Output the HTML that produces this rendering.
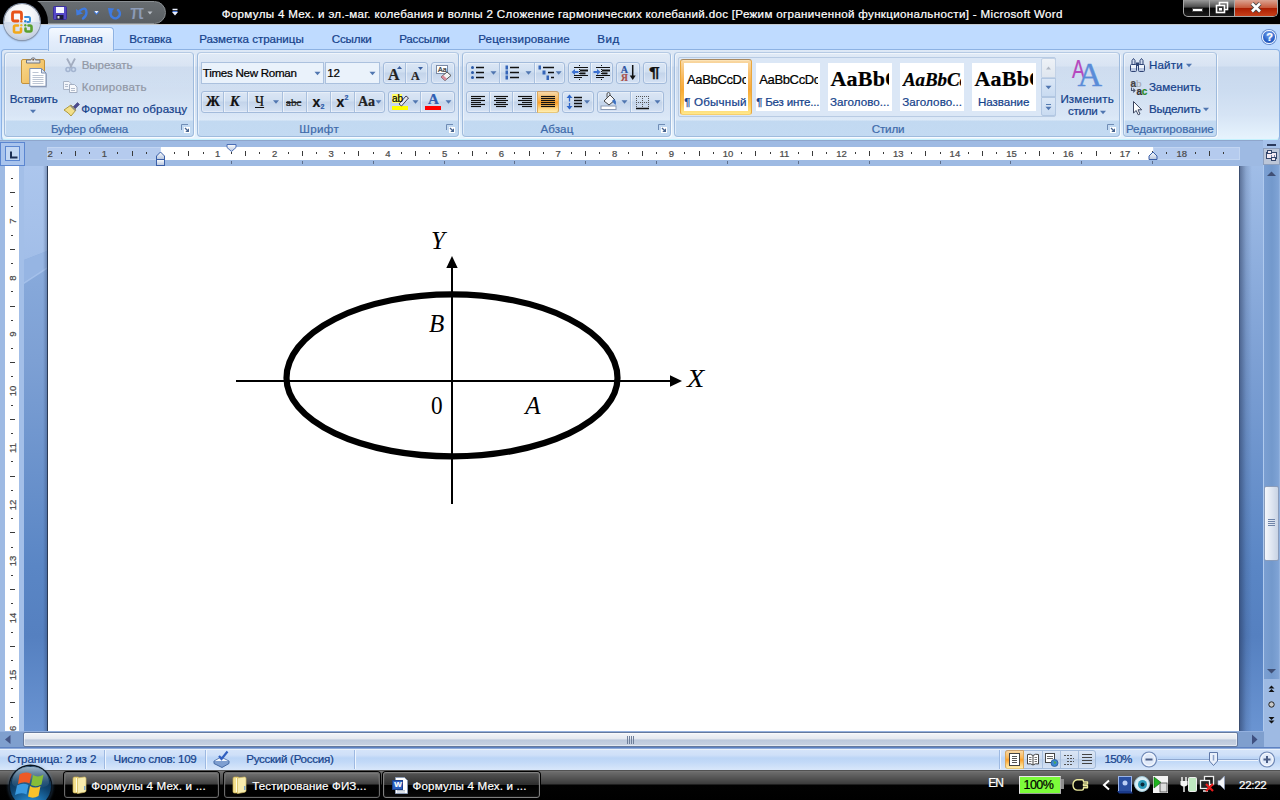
<!DOCTYPE html>
<html lang="ru"><head><meta charset="utf-8"><title>Microsoft Word</title>
<style>
html,body{margin:0;padding:0;}
body{width:1280px;height:800px;overflow:hidden;position:relative;background:#bfdbff;font:12px 'Liberation Sans', sans-serif;}
.a{position:absolute;box-sizing:border-box;}
.t{position:absolute;white-space:pre;}
svg{position:absolute;overflow:visible;}
.t{-webkit-text-stroke:0.22px currentColor;}

</style></head>
<body>
<div class="a" style="left:0px;top:0px;width:1280px;height:24px;background:#000;"></div>
<div class="a" style="left:0px;top:24px;width:1280px;height:1px;background:#c4c9ce;"></div>
<div class="a" style="left:22px;top:1px;width:144px;height:23px;background:linear-gradient(#686d71,#61666a 50%,#5a5f63);border:1px solid #8a8f93;border-radius:0 12px 12px 0;"></div>
<span class="t" style="left:221.7px;top:6.0px;line-height:15px;font:11.6px/15px 'Liberation Sans', sans-serif;color:#fff;letter-spacing:0.32px;">Формулы 4 Мех. и эл.-маг. колебания и волны 2 Сложение гармонических колебаний.doc [Режим ограниченной функциональности] - Microsoft Word</span>
<div class="a" style="left:1183px;top:0px;width:95px;height:17px;border:1px solid #a8a8a8;border-top:none;border-radius:0 0 5px 5px;background:linear-gradient(#9a9a9a,#4a4a4a 45%,#050505 50%,#1c1c1c);overflow:hidden;"><div class="a" style="left:25px;top:0;width:1px;height:17px;background:#a8a8a8"></div><div class="a" style="left:50px;top:0;width:1px;height:17px;background:#a8a8a8"></div><div class="a" style="left:51px;top:0;width:44px;height:17px;background:linear-gradient(#dba392,#c75a3c 45%,#ab1e02 50%,#cb451e)"></div></div>
<svg style="left:0;top:0" width="1280" height="60"><rect x="1192.500" y="8.500" width="10" height="3" fill="#fff" stroke="#444" stroke-width="1"/><rect x="1219.500" y="2.500" width="8" height="7" fill="none" stroke="#fff" stroke-width="1.600"/><rect x="1216.500" y="5.500" width="8" height="7" fill="#333" stroke="#fff" stroke-width="1.600"/><rect x="1219" y="8" width="3" height="2.500" fill="#fff"/><path d="M1252,3.500 l8,8 M1260,3.500 l-8,8" stroke="#444" stroke-width="4.500"/><path d="M1252,3.500 l8,8 M1260,3.500 l-8,8" stroke="#fff" stroke-width="2.600"/></svg>
<svg style="left:0;top:0" width="1280" height="60"><rect x="53.500" y="6.500" width="13" height="13" rx="1" fill="#5548c8" stroke="#3a2f9a" stroke-width="1"/><rect x="56" y="7" width="8" height="6" fill="#f4f6ff"/><rect x="56.500" y="15" width="7" height="4.500" fill="#1a1a3a"/><rect x="57.500" y="16" width="2" height="2.500" fill="#ddd"/><path d="M76,9 l0.500,6.500 l6.500,-2 z" fill="#3f7be0"/><path d="M79.500,11 q6.500,-5.500 7,1.500 q0,3.500 -3.500,6" fill="none" stroke="#3f7be0" stroke-width="2.400" stroke-linecap="round"/><polygon points="93.500,11.500 99.500,11.500 96.500,15" fill="#3f7be0"/><polygon points="94.500,11 98.500,11 96.500,13.500" fill="#eef3ff"/><path d="M111.300,11.300 A4.600,4.600 0 1 0 118,10" fill="none" stroke="#3f7be0" stroke-width="2.600" stroke-linecap="round"/><polygon points="108,8 114.500,8.500 109,14" fill="#3f7be0"/><polygon points="147.500,11.500 152.500,11.500 150,14.500" fill="#b8bec6"/><path d="M172.500,9.500 h5" stroke="#e8eefc" stroke-width="1.500"/><polygon points="172,12 178,12 175,15.500" fill="#e8eefc"/><path d="M172.500,11.500 h5" stroke="#4a7be0" stroke-width="1"/></svg>
<span class="t" style="left:130.0px;top:-2.0px;line-height:27px;font:21px/27px 'Liberation Sans', sans-serif;color:#8d9cb8;">π</span>
<div class="a" style="left:0px;top:0px;width:60px;height:24px;overflow:hidden;"><div class="a" style="left:-4px;top:-4px;width:52px;height:52px;border-radius:50%;background:#000;"></div></div>
<div class="a" style="left:4px;top:4px;width:36px;height:36px;border-radius:50%;background:radial-gradient(circle at 50% 30%,#ffffff 0,#f2f5f9 38%,#d3dbe8 68%,#a3b3ca 100%);box-shadow:0 0 0 1px #8a98b0, 0 1px 2px rgba(0,0,0,.45);"></div>
<div class="a" style="left:5px;top:22px;width:34px;height:17px;border-radius:0 0 17px 17px;background:linear-gradient(rgba(190,205,228,.55),rgba(255,255,255,.0));"></div>
<svg style="left:0;top:0" width="1280" height="60"><path d="M21.500,19 v-5 a2,2 0 0 0 -2,-2 h-5 a2,2 0 0 0 -2,2 v5 a2,2 0 0 0 2,2 h3.500" fill="none" stroke="#e8541a" stroke-width="2.800" stroke-linecap="round"/><path d="M25,17 h3.500 a1.500,1.500 0 0 1 1.500,1.500 v2 a1.500,1.500 0 0 1 -1.500,1.500 h-1" fill="none" stroke="#3a8fd8" stroke-width="2" stroke-linecap="round"/><path d="M18,25.500 h-2.500 a1.500,1.500 0 0 0 -1.500,1.500 v4 a1.500,1.500 0 0 0 1.500,1.500 h4 a1.500,1.500 0 0 0 1.500,-1.500 v-2.500" fill="none" stroke="#f2a81a" stroke-width="2.600" stroke-linecap="round"/><path d="M25.500,28.500 v1.500 a1.500,1.500 0 0 0 1.500,1.500 h3 a1.500,1.500 0 0 0 1.500,-1.500 v-3 a1.500,1.500 0 0 0 -1.500,-1.500 h-1.500" fill="none" stroke="#5aa02e" stroke-width="2.600" stroke-linecap="round"/><circle cx="21.300" cy="21.300" r="1.200" fill="#ee6a1a"/><circle cx="25.300" cy="21.300" r="1.200" fill="#2a7fd8"/><circle cx="21.300" cy="25.300" r="1.200" fill="#f5b82a"/><circle cx="25.300" cy="25.300" r="1.200" fill="#5aa832"/></svg>
<div class="a" style="left:1px;top:49px;width:1279px;height:91px;border:1px solid #8db2e3;border-bottom-color:#c3f1fd;border-radius:4px;background:linear-gradient(#dee9f6 0,#d4e1f2 16px,#c8d8ed 17px,#ccdcf0 40px,#d6e4f5 65px,#e6f3fd 88px);box-shadow:0 1px 0 #8fa3c8;"></div>
<div class="a" style="left:48px;top:27px;width:66px;height:24px;border:1px solid #8db2e3;border-bottom:none;border-radius:4px 4px 0 0;background:linear-gradient(#f4f9ff,#e3edfb 60%,#dde9f8);box-shadow:0 0 2px #d7ebff;"></div>
<span class="t" style="left:59.2px;top:31.0px;line-height:15px;font:11.6px/15px 'Liberation Sans', sans-serif;color:#15428b;letter-spacing:-0.09px;">Главная</span>
<span class="t" style="left:129.2px;top:31.0px;line-height:15px;font:11.6px/15px 'Liberation Sans', sans-serif;color:#15428b;letter-spacing:-0.08px;">Вставка</span>
<span class="t" style="left:199.2px;top:31.0px;line-height:15px;font:11.6px/15px 'Liberation Sans', sans-serif;color:#15428b;letter-spacing:-0.04px;">Разметка страницы</span>
<span class="t" style="left:331.7px;top:31.0px;line-height:15px;font:11.6px/15px 'Liberation Sans', sans-serif;color:#15428b;letter-spacing:-0.14px;">Ссылки</span>
<span class="t" style="left:399.2px;top:31.0px;line-height:15px;font:11.6px/15px 'Liberation Sans', sans-serif;color:#15428b;letter-spacing:-0.20px;">Рассылки</span>
<span class="t" style="left:478.2px;top:31.0px;line-height:15px;font:11.6px/15px 'Liberation Sans', sans-serif;color:#15428b;letter-spacing:0.16px;">Рецензирование</span>
<span class="t" style="left:597.2px;top:31.0px;line-height:15px;font:11.6px/15px 'Liberation Sans', sans-serif;color:#15428b;letter-spacing:0.57px;">Вид</span>
<div class="a" style="left:1262px;top:30px;width:14px;height:14px;border-radius:50%;background:radial-gradient(circle at 50% 30%,#7aa6ee,#2a62c9 60%,#1748a8);border:1px solid #f4f8ff;box-shadow:0 0 0 1px #6a8fd0;"></div>
<span class="t" style="left:1266.2px;top:30.3px;line-height:14px;font:11px/14px 'Liberation Sans', sans-serif;color:#fff;font-weight:bold;">?</span>
<div class="a" style="left:4px;top:52px;width:190px;height:85px;border:1px solid #9fbbdd;border-top-color:#b5cae4;border-radius:4px;background:linear-gradient(rgba(255,255,255,.12) 0,rgba(255,255,255,.08) 67px,#c2d9f1 68px,#c3daf2 84px);box-shadow:inset 1px 1px 0 rgba(255,255,255,.5), 1px 1px 0 rgba(255,255,255,.75);"></div>
<span class="t" style="left:50.9px;top:121.0px;line-height:15px;font:11.6px/15px 'Liberation Sans', sans-serif;color:#3e6aaa;letter-spacing:-0.13px;">Буфер обмена</span>
<svg style="left:0;top:0" width="1280" height="145"><path d="M181.5,130 v-5.500 h6.500" fill="none" stroke="#6f8cb5" stroke-width="1"/><rect x="184" y="127" width="6" height="6" fill="#fff"/><path d="M185,128 l3.500,3.500" stroke="#47648f" stroke-width="1.300"/><polygon points="189,132 189,128.300 185.3,132" fill="#47648f"/></svg>
<div class="a" style="left:197px;top:52px;width:262px;height:85px;border:1px solid #9fbbdd;border-top-color:#b5cae4;border-radius:4px;background:linear-gradient(rgba(255,255,255,.12) 0,rgba(255,255,255,.08) 67px,#c2d9f1 68px,#c3daf2 84px);box-shadow:inset 1px 1px 0 rgba(255,255,255,.5), 1px 1px 0 rgba(255,255,255,.75);"></div>
<span class="t" style="left:299.2px;top:121.0px;line-height:15px;font:11.6px/15px 'Liberation Sans', sans-serif;color:#3e6aaa;letter-spacing:0.37px;">Шрифт</span>
<svg style="left:0;top:0" width="1280" height="145"><path d="M446.5,130 v-5.500 h6.500" fill="none" stroke="#6f8cb5" stroke-width="1"/><rect x="449" y="127" width="6" height="6" fill="#fff"/><path d="M450,128 l3.500,3.500" stroke="#47648f" stroke-width="1.300"/><polygon points="454,132 454,128.300 450.3,132" fill="#47648f"/></svg>
<div class="a" style="left:462px;top:52px;width:209px;height:85px;border:1px solid #9fbbdd;border-top-color:#b5cae4;border-radius:4px;background:linear-gradient(rgba(255,255,255,.12) 0,rgba(255,255,255,.08) 67px,#c2d9f1 68px,#c3daf2 84px);box-shadow:inset 1px 1px 0 rgba(255,255,255,.5), 1px 1px 0 rgba(255,255,255,.75);"></div>
<span class="t" style="left:540.4px;top:121.0px;line-height:15px;font:11.6px/15px 'Liberation Sans', sans-serif;color:#3e6aaa;letter-spacing:0.09px;">Абзац</span>
<svg style="left:0;top:0" width="1280" height="145"><path d="M658.5,130 v-5.500 h6.500" fill="none" stroke="#6f8cb5" stroke-width="1"/><rect x="661" y="127" width="6" height="6" fill="#fff"/><path d="M662,128 l3.500,3.500" stroke="#47648f" stroke-width="1.300"/><polygon points="666,132 666,128.300 662.3,132" fill="#47648f"/></svg>
<div class="a" style="left:674px;top:52px;width:446px;height:85px;border:1px solid #9fbbdd;border-top-color:#b5cae4;border-radius:4px;background:linear-gradient(rgba(255,255,255,.12) 0,rgba(255,255,255,.08) 67px,#c2d9f1 68px,#c3daf2 84px);box-shadow:inset 1px 1px 0 rgba(255,255,255,.5), 1px 1px 0 rgba(255,255,255,.75);"></div>
<span class="t" style="left:871.7px;top:121.0px;line-height:15px;font:11.6px/15px 'Liberation Sans', sans-serif;color:#3e6aaa;letter-spacing:-0.13px;">Стили</span>
<svg style="left:0;top:0" width="1280" height="145"><path d="M1107.5,130 v-5.500 h6.500" fill="none" stroke="#6f8cb5" stroke-width="1"/><rect x="1110" y="127" width="6" height="6" fill="#fff"/><path d="M1111,128 l3.500,3.500" stroke="#47648f" stroke-width="1.300"/><polygon points="1115,132 1115,128.300 1111.3,132" fill="#47648f"/></svg>
<div class="a" style="left:1123px;top:52px;width:94px;height:85px;border:1px solid #9fbbdd;border-top-color:#b5cae4;border-radius:4px;background:linear-gradient(rgba(255,255,255,.12) 0,rgba(255,255,255,.08) 67px,#c2d9f1 68px,#c3daf2 84px);box-shadow:inset 1px 1px 0 rgba(255,255,255,.5), 1px 1px 0 rgba(255,255,255,.75);"></div>
<span class="t" style="left:1125.9px;top:121.0px;line-height:15px;font:11.6px/15px 'Liberation Sans', sans-serif;color:#3e6aaa;letter-spacing:-0.03px;">Редактирование</span>
<span class="t" style="left:9.7px;top:91.0px;line-height:15px;font:11.6px/15px 'Liberation Sans', sans-serif;color:#15428b;letter-spacing:-0.15px;">Вставить</span>
<svg style="left:0;top:0" width="1280" height="145"><polygon points="30,109.8 36,109.8 33,113.3" fill="#5076b0"/></svg>
<span class="t" style="left:81.7px;top:57.0px;line-height:15px;font:11.6px/15px 'Liberation Sans', sans-serif;color:#9198a6;letter-spacing:-0.10px;">Вырезать</span>
<span class="t" style="left:81.7px;top:79.0px;line-height:15px;font:11.6px/15px 'Liberation Sans', sans-serif;color:#9198a6;letter-spacing:0.27px;">Копировать</span>
<span class="t" style="left:81.2px;top:101.0px;line-height:15px;font:11.6px/15px 'Liberation Sans', sans-serif;color:#15428b;letter-spacing:0.12px;">Формат по образцу</span>
<svg style="left:0;top:0" width="1280" height="145"><defs><linearGradient id="cb" x1="0" y1="0" x2="1" y2="1"><stop offset="0" stop-color="#f9d98f"/><stop offset="1" stop-color="#eeb650"/></linearGradient></defs><rect x="21.500" y="59.500" width="23" height="24" rx="1.500" fill="url(#cb)" stroke="#c4923a" stroke-width="1"/><path d="M26.500,63 v-3 h4.500 a2.200,2.200 0 0 1 4.400,0 h4.500 v3z" fill="#e4e6ea" stroke="#6f7480" stroke-width="1"/><circle cx="33.200" cy="59.700" r="0.900" fill="#6a4a2a"/><path d="M31,70 h11.500 l4.500,4.500 v13 h-16z" fill="rgba(90,100,130,.35)"/><path d="M29.800,68.500 h11.700 l4.500,4.500 v13.300 h-16.200z" fill="#fff" stroke="#7d8fb0" stroke-width="1"/><path d="M41.500,68.500 v4.500 h4.500z" fill="#dfe6f0" stroke="#7d8fb0" stroke-width="1"/><path d="M32.500,72.500h6M32.500,75.500h11M32.500,77.500h11M32.500,79.500h11M32.500,81.500h11M32.500,83.500h11" stroke="#bcc5d3" stroke-width="1"/></svg>
<svg style="left:0;top:0" width="1280" height="145"><path d="M67,58.500 l5,9.500 M75,58.500 l-5,9.500" stroke="#a3adc0" stroke-width="1.800" fill="none"/><circle cx="68" cy="69.500" r="2" fill="none" stroke="#a3b4d0" stroke-width="1.600"/><circle cx="73.500" cy="69.500" r="2" fill="none" stroke="#a3b4d0" stroke-width="1.600"/></svg>
<svg style="left:0;top:0" width="1280" height="145"><path d="M63.500,81.500 h5.500 l2.500,2.500 v5.500 h-8z" fill="#f2f5fa" stroke="#a9b4c6" stroke-width="1"/><path d="M69.500,84.500 h5 l2.500,2.500 v5.500 h-7.500z" fill="#f7f9fc" stroke="#a3afc2" stroke-width="1"/><path d="M65,84.500h3M65,86.500h3M71,88.500h4M71,90.500h4" stroke="#b4bdcc" stroke-width="1"/></svg>
<svg style="left:0;top:0" width="1280" height="145"><path d="M73,107 l4.500,-4.500 l2,2 l-4.500,4.500z" fill="#4b4a8f" stroke="#33336b" stroke-width=".5"/><path d="M64,110 l7,-5 l5,5 l-5,6 q-2,-3 -7,-6z" fill="#f2df8a" stroke="#b09a3a" stroke-width="1"/><path d="M70.500,105.500 l5,5" stroke="#8a8a8a" stroke-width="1.500"/></svg>
<div class="a" style="left:201px;top:62px;width:123px;height:22px;border:1px solid #abc1de;background:#eaf2fb;"></div>
<div class="a" style="left:325px;top:62px;width:55px;height:22px;border:1px solid #abc1de;background:#eaf2fb;"></div>
<span class="t" style="left:202.8px;top:65.0px;line-height:15px;font:11.6px/15px 'Liberation Sans', sans-serif;color:#000;letter-spacing:-0.29px;">Times New Roman</span>
<span class="t" style="left:327.2px;top:65.0px;line-height:15px;font:11.6px/15px 'Liberation Sans', sans-serif;color:#000;letter-spacing:-0.03px;">12</span>
<svg style="left:0;top:0" width="1280" height="145"><polygon points="314.5,71.8 320.5,71.8 317.5,75.3" fill="#5076b0"/><polygon points="369.5,71.8 375.5,71.8 372.5,75.3" fill="#5076b0"/></svg>
<div class="a" style="left:383px;top:62px;width:45px;height:22px;border:1px solid #a3bbdb;border-radius:3px;background:linear-gradient(#dbe6f5,#d0dff1 45%,#c3d4ea 50%,#d5e2f4);box-shadow:inset 0 0 0 1px rgba(255,255,255,.35);"><div class="a" style="left:20.5px;top:0;width:1px;height:20px;background:#a9c0de;box-shadow:1px 0 0 rgba(255,255,255,.5)"></div></div>
<div class="a" style="left:431px;top:62px;width:24px;height:22px;border:1px solid #a3bbdb;border-radius:3px;background:linear-gradient(#dbe6f5,#d0dff1 45%,#c3d4ea 50%,#d5e2f4);box-shadow:inset 0 0 0 1px rgba(255,255,255,.35);"></div>
<div class="a" style="left:201px;top:91px;width:184px;height:22px;border:1px solid #a3bbdb;border-radius:3px;background:linear-gradient(#dbe6f5,#d0dff1 45%,#c3d4ea 50%,#d5e2f4);box-shadow:inset 0 0 0 1px rgba(255,255,255,.35);"><div class="a" style="left:21px;top:0;width:1px;height:20px;background:#a9c0de;box-shadow:1px 0 0 rgba(255,255,255,.5)"></div><div class="a" style="left:44.5px;top:0;width:1px;height:20px;background:#a9c0de;box-shadow:1px 0 0 rgba(255,255,255,.5)"></div><div class="a" style="left:80px;top:0;width:1px;height:20px;background:#a9c0de;box-shadow:1px 0 0 rgba(255,255,255,.5)"></div><div class="a" style="left:103.5px;top:0;width:1px;height:20px;background:#a9c0de;box-shadow:1px 0 0 rgba(255,255,255,.5)"></div><div class="a" style="left:127.5px;top:0;width:1px;height:20px;background:#a9c0de;box-shadow:1px 0 0 rgba(255,255,255,.5)"></div><div class="a" style="left:151.5px;top:0;width:1px;height:20px;background:#a9c0de;box-shadow:1px 0 0 rgba(255,255,255,.5)"></div></div>
<div class="a" style="left:388px;top:91px;width:67px;height:22px;border:1px solid #a3bbdb;border-radius:3px;background:linear-gradient(#dbe6f5,#d0dff1 45%,#c3d4ea 50%,#d5e2f4);box-shadow:inset 0 0 0 1px rgba(255,255,255,.35);"><div class="a" style="left:31px;top:0;width:1px;height:20px;background:#a9c0de;box-shadow:1px 0 0 rgba(255,255,255,.5)"></div></div>
<span class="t" style="left:388.0px;top:64.0px;line-height:21px;font:16px/21px 'Liberation Serif', serif;color:#222;font-weight:bold;">A</span>
<span class="t" style="left:411.0px;top:68.0px;line-height:16px;font:12px/16px 'Liberation Serif', serif;color:#222;font-weight:bold;">A</span>
<svg style="left:0;top:0" width="1280" height="145"><polygon points="397,69 402,69 399.500,66" fill="#3a5f9f"/><polygon points="418,67 423,67 420.500,70" fill="#3a5f9f"/></svg>
<svg style="left:0;top:0" width="1280" height="145"><rect x="436.500" y="65.500" width="11" height="8" fill="#fff" stroke="#7a8aa5" stroke-width="1"/><path d="M441,77 l6,-5 l4,3.500 l-6,5z" fill="#f3f3f3" stroke="#555" stroke-width="1"/><path d="M441,77 l2,-1.700 l4,3.500 l-2,1.700z" fill="#d98a9a"/></svg>
<span class="t" style="left:438.0px;top:65.0px;line-height:9px;font:7px/9px 'Liberation Sans', sans-serif;color:#333;">Aa</span>
<span class="t" style="left:206.0px;top:92.5px;line-height:18px;font:14px/18px 'Liberation Serif', serif;color:#111;font-weight:bold;">Ж</span>
<span class="t" style="left:230.0px;top:92.5px;line-height:18px;font:14px/18px 'Liberation Serif', serif;color:#111;font-weight:bold;font-style:italic;">К</span>
<span class="t" style="left:255.0px;top:92.5px;line-height:18px;font:14px/18px 'Liberation Serif', serif;color:#111;text-decoration:underline;">Ч</span>
<span class="t" style="left:286.0px;top:94.5px;line-height:14px;font:11px/14px 'Liberation Serif', serif;color:#222;text-decoration:line-through;">abc</span>
<span class="t" style="left:312.5px;top:92.5px;line-height:18px;font:14px/18px 'Liberation Sans', sans-serif;color:#111;font-weight:bold;">x</span>
<span class="t" style="left:320.5px;top:101.5px;line-height:9px;font:7px/9px 'Liberation Sans', sans-serif;color:#2c5aa8;font-weight:bold;">2</span>
<span class="t" style="left:336.5px;top:92.5px;line-height:18px;font:14px/18px 'Liberation Sans', sans-serif;color:#111;font-weight:bold;">x</span>
<span class="t" style="left:344.5px;top:92.5px;line-height:9px;font:7px/9px 'Liberation Sans', sans-serif;color:#2c5aa8;font-weight:bold;">2</span>
<span class="t" style="left:358.0px;top:92.5px;line-height:18px;font:14px/18px 'Liberation Serif', serif;color:#222;font-weight:bold;">Aa</span>
<svg style="left:0;top:0" width="1280" height="145"><polygon points="273,100.3 279,100.3 276,103.8" fill="#5076b0"/><polygon points="375.5,100.3 381.5,100.3 378.5,103.8" fill="#5076b0"/><polygon points="412.5,100.3 418.5,100.3 415.5,103.8" fill="#5076b0"/><polygon points="445.5,100.3 451.5,100.3 448.5,103.8" fill="#5076b0"/></svg>
<svg style="left:0;top:0" width="1280" height="145"><rect x="392" y="106" width="16" height="4" fill="#ffff00"/><rect x="392" y="94" width="10" height="9" fill="#ffff66"/><path d="M399,104 l7,-8 l2.500,2 l-7,8z" fill="#e8e8f4" stroke="#445" stroke-width="1"/></svg>
<span class="t" style="left:392.0px;top:92.0px;line-height:13px;font:10px/13px 'Liberation Sans', sans-serif;color:#000;">ab</span>
<svg style="left:0;top:0" width="1280" height="145"><rect x="425" y="106" width="16" height="4" fill="#ff0000"/></svg>
<span class="t" style="left:428.0px;top:88.5px;line-height:20px;font:15px/20px 'Liberation Serif', serif;color:#2f5fb3;font-weight:bold;">A</span>
<div class="a" style="left:466px;top:62px;width:99px;height:22px;border:1px solid #a3bbdb;border-radius:3px;background:linear-gradient(#dbe6f5,#d0dff1 45%,#c3d4ea 50%,#d5e2f4);box-shadow:inset 0 0 0 1px rgba(255,255,255,.35);"><div class="a" style="left:32px;top:0;width:1px;height:20px;background:#a9c0de;box-shadow:1px 0 0 rgba(255,255,255,.5)"></div><div class="a" style="left:67px;top:0;width:1px;height:20px;background:#a9c0de;box-shadow:1px 0 0 rgba(255,255,255,.5)"></div></div>
<div class="a" style="left:568px;top:62px;width:45px;height:22px;border:1px solid #a3bbdb;border-radius:3px;background:linear-gradient(#dbe6f5,#d0dff1 45%,#c3d4ea 50%,#d5e2f4);box-shadow:inset 0 0 0 1px rgba(255,255,255,.35);"><div class="a" style="left:21px;top:0;width:1px;height:20px;background:#a9c0de;box-shadow:1px 0 0 rgba(255,255,255,.5)"></div></div>
<div class="a" style="left:616px;top:62px;width:24px;height:22px;border:1px solid #a3bbdb;border-radius:3px;background:linear-gradient(#dbe6f5,#d0dff1 45%,#c3d4ea 50%,#d5e2f4);box-shadow:inset 0 0 0 1px rgba(255,255,255,.35);"></div>
<div class="a" style="left:643px;top:62px;width:24px;height:22px;border:1px solid #a3bbdb;border-radius:3px;background:linear-gradient(#dbe6f5,#d0dff1 45%,#c3d4ea 50%,#d5e2f4);box-shadow:inset 0 0 0 1px rgba(255,255,255,.35);"></div>
<div class="a" style="left:466px;top:91px;width:93px;height:22px;border:1px solid #a3bbdb;border-radius:3px;background:linear-gradient(#dbe6f5,#d0dff1 45%,#c3d4ea 50%,#d5e2f4);box-shadow:inset 0 0 0 1px rgba(255,255,255,.35);"><div class="a" style="left:21.5px;top:0;width:1px;height:20px;background:#a9c0de;box-shadow:1px 0 0 rgba(255,255,255,.5)"></div><div class="a" style="left:44.5px;top:0;width:1px;height:20px;background:#a9c0de;box-shadow:1px 0 0 rgba(255,255,255,.5)"></div><div class="a" style="left:67.5px;top:0;width:1px;height:20px;background:#a9c0de;box-shadow:1px 0 0 rgba(255,255,255,.5)"></div><div class="a" style="left:69.5px;top:-1px;width:22.5px;height:22px;border:1px solid #dba85a;border-top-color:#c9a070;border-bottom-color:#e8c87a;border-radius:0 3px 3px 0;background:linear-gradient(#f8d9a8,#fbb654 40%,#fb9f2a 52%,#fdd27c 80%,#ffeeb0);"></div></div>
<div class="a" style="left:562px;top:91px;width:32px;height:22px;border:1px solid #a3bbdb;border-radius:3px;background:linear-gradient(#dbe6f5,#d0dff1 45%,#c3d4ea 50%,#d5e2f4);box-shadow:inset 0 0 0 1px rgba(255,255,255,.35);"></div>
<div class="a" style="left:597px;top:91px;width:67px;height:22px;border:1px solid #a3bbdb;border-radius:3px;background:linear-gradient(#dbe6f5,#d0dff1 45%,#c3d4ea 50%,#d5e2f4);box-shadow:inset 0 0 0 1px rgba(255,255,255,.35);"><div class="a" style="left:32px;top:0;width:1px;height:20px;background:#a9c0de;box-shadow:1px 0 0 rgba(255,255,255,.5)"></div></div>
<svg style="left:0;top:0" width="1280" height="145"><circle cx="472.500" cy="67.5" r="1.500" fill="#2c5aa8"/><path d="M476,67.5 h8" stroke="#111" stroke-width="1.500"/><circle cx="472.500" cy="72.5" r="1.500" fill="#2c5aa8"/><path d="M476,72.5 h8" stroke="#111" stroke-width="1.500"/><circle cx="472.500" cy="77.5" r="1.500" fill="#2c5aa8"/><path d="M476,77.5 h8" stroke="#111" stroke-width="1.500"/><rect x="505.500" y="65.5" width="2.500" height="4" fill="#3565b8"/><path d="M510,67.5 h9" stroke="#111" stroke-width="1.500"/><rect x="505.500" y="70.5" width="2.500" height="4" fill="#3565b8"/><path d="M510,72.5 h9" stroke="#111" stroke-width="1.500"/><rect x="505.500" y="75.5" width="2.500" height="4" fill="#3565b8"/><path d="M510,77.5 h9" stroke="#111" stroke-width="1.500"/><rect x="538.500" y="65.500" width="2.500" height="4" fill="#3565b8"/><path d="M543,67.500 h11" stroke="#111" stroke-width="1.500"/><rect x="542.500" y="70.500" width="3" height="4" fill="#3565b8"/><path d="M548,72.500 h6" stroke="#111" stroke-width="1.500"/><rect x="546.500" y="75.500" width="2.500" height="4.500" fill="#3565b8"/><path d="M551,77.500 h3" stroke="#111" stroke-width="1.500"/><polygon points="490.5,71.3 496.5,71.3 493.5,74.8" fill="#5076b0"/><polygon points="525.5,71.3 531.5,71.3 528.5,74.8" fill="#5076b0"/><polygon points="555.7,71.3 561.7,71.3 558.7,74.8" fill="#5076b0"/><path d="M579.5,65 v15" stroke="#111" stroke-width="1" stroke-dasharray="1,1"/><path d="M574.0,67.500 h14 M574.0,75.500 h14 M574.0,77.500 h8" stroke="#111" stroke-width="1"/><rect x="580.0" y="69.500" width="8" height="2" fill="#111"/><rect x="580.0" y="72.500" width="5.500" height="1.800" fill="#111"/><path d="M571.5,72 l3.500,-3 v2 h3.500 v2 h-3.500 v2z" fill="#3a6fd0"/><path d="M601.5,65 v15" stroke="#111" stroke-width="1" stroke-dasharray="1,1"/><path d="M596.0,67.500 h14 M596.0,75.500 h14 M596.0,77.500 h8" stroke="#111" stroke-width="1"/><rect x="602.0" y="69.500" width="8" height="2" fill="#111"/><rect x="602.0" y="72.500" width="5.500" height="1.800" fill="#111"/><path d="M600.5,72 l-3.500,-3 v2 h-3.500 v2 h3.500 v2z" fill="#3a6fd0"/><path d="M632.700,65 v11" stroke="#111" stroke-width="1.500"/><polygon points="629.700,75.500 635.700,75.500 632.700,80" fill="#111"/><path d="M471,96.5 h14" stroke="#111" stroke-width="1.15"/><path d="M471,98.5 h10" stroke="#111" stroke-width="1.15"/><path d="M471,100.5 h14" stroke="#111" stroke-width="1.15"/><path d="M471,102.5 h10" stroke="#111" stroke-width="1.15"/><path d="M471,104.5 h14" stroke="#111" stroke-width="1.15"/><path d="M471,106.5 h10" stroke="#111" stroke-width="1.15"/><path d="M494,96.5 h14" stroke="#111" stroke-width="1.15"/><path d="M496,98.5 h10" stroke="#111" stroke-width="1.15"/><path d="M494,100.5 h14" stroke="#111" stroke-width="1.15"/><path d="M496,102.5 h10" stroke="#111" stroke-width="1.15"/><path d="M494,104.5 h14" stroke="#111" stroke-width="1.15"/><path d="M496,106.5 h10" stroke="#111" stroke-width="1.15"/><path d="M518,96.5 h14" stroke="#111" stroke-width="1.15"/><path d="M522,98.5 h10" stroke="#111" stroke-width="1.15"/><path d="M518,100.5 h14" stroke="#111" stroke-width="1.15"/><path d="M522,102.5 h10" stroke="#111" stroke-width="1.15"/><path d="M518,104.5 h14" stroke="#111" stroke-width="1.15"/><path d="M522,106.5 h10" stroke="#111" stroke-width="1.15"/><path d="M541,96.5 h14" stroke="#111" stroke-width="1.15"/><path d="M541,98.5 h14" stroke="#111" stroke-width="1.15"/><path d="M541,100.5 h14" stroke="#111" stroke-width="1.15"/><path d="M541,102.5 h14" stroke="#111" stroke-width="1.15"/><path d="M541,104.5 h14" stroke="#111" stroke-width="1.15"/><path d="M541,106.5 h14" stroke="#111" stroke-width="1.15"/><path d="M574,97.5 h8" stroke="#111" stroke-width="1.5"/><path d="M574,100.5 h8" stroke="#111" stroke-width="1.5"/><path d="M574,103.5 h8" stroke="#111" stroke-width="1.5"/><path d="M574,106.5 h8" stroke="#111" stroke-width="1.5"/><path d="M569.500,96 v5.500 M569.500,103 v5.500" stroke="#2f66c8" stroke-width="1.300"/><polygon points="566.500,98 572.500,98 569.500,94.500" fill="#2f66c8"/><polygon points="566.500,106 572.500,106 569.500,109.500" fill="#2f66c8"/><polygon points="584,100.3 590,100.3 587,103.8" fill="#5076b0"/><rect x="601" y="106" width="15" height="3.500" fill="#fff" stroke="#8a9ab5" stroke-width="1"/><path d="M604,101 l6,-6 l5,5 l-6,5z" fill="#f4f6fa" stroke="#444" stroke-width="1"/><path d="M614,99 q3,2 1.500,6 q-2,-2 -3.500,-4z" fill="#3a6fc0"/><path d="M607,97.500 v-3.500 a1.500,1.500 0 0 1 3,0 v2" fill="none" stroke="#555" stroke-width="1"/><polygon points="621.5,100.3 627.5,100.3 624.5,103.8" fill="#5076b0"/><path d="M636,96.500 h13 M636,102.500 h13" stroke="#555" stroke-width="1" stroke-dasharray="1,1"/><path d="M636.500,96 v12 M642.500,96 v12 M648.500,96 v12" stroke="#555" stroke-width="1" stroke-dasharray="1,1"/><path d="M636,108.500 h13" stroke="#111" stroke-width="1.500"/><polygon points="654.5,100.3 660.5,100.3 657.5,103.8" fill="#5076b0"/></svg>
<span class="t" style="left:620.8px;top:62.8px;line-height:13px;font:10px/13px 'Liberation Serif', serif;color:#2f55a0;font-weight:bold;">A</span>
<span class="t" style="left:621.0px;top:71.8px;line-height:12px;font:9.5px/12px 'Liberation Serif', serif;color:#a8504a;font-weight:bold;">Я</span>
<span class="t" style="left:649.3px;top:61.6px;line-height:20px;font:15px/20px 'Liberation Sans', sans-serif;color:#111;font-weight:bold;transform:scaleX(1.3);transform-origin:0 50%;">¶</span>
<div class="a" style="left:678px;top:57px;width:378px;height:60px;border:1px solid #b8cbe3;background:#dbe7f6;border-radius:2px;"></div>
<div class="a" style="left:680px;top:59px;width:72px;height:56px;border:1px solid #e9a63c;border-top-color:#a98a62;border-bottom-color:#f6cf6e;border-radius:3px;background:linear-gradient(#f8d9a6,#f9b656 35%,#f8a935 55%,#fbc755 80%,#ffe88c);box-shadow:inset 0 1px 0 #fbe3b8;"></div>
<div class="a" style="left:684px;top:63px;width:64px;height:48px;background:#fff;"></div>
<div class="a" style="left:756px;top:63px;width:64px;height:48px;background:#fff;"></div>
<div class="a" style="left:828px;top:63px;width:64px;height:48px;background:#fff;"></div>
<div class="a" style="left:900px;top:63px;width:64px;height:48px;background:#fff;"></div>
<div class="a" style="left:972px;top:63px;width:64px;height:48px;background:#fff;"></div>
<div class="a" style="left:686px;top:68px;width:60px;height:24px;overflow:hidden;"><span class="t" style="left:1px;top:3px;font:13px/17px 'Liberation Sans', sans-serif;color:#000;letter-spacing:-0.35px;">AaBbCcDc</span></div>
<span class="t" style="left:684.2px;top:94.0px;line-height:15px;font:11.6px/15px 'Liberation Sans', sans-serif;color:#15428b;letter-spacing:0.19px;">¶ Обычный</span>
<div class="a" style="left:758px;top:68px;width:60px;height:24px;overflow:hidden;"><span class="t" style="left:1.2px;top:3px;font:13px/17px 'Liberation Sans', sans-serif;color:#000;letter-spacing:-0.35px;">AaBbCcDc</span></div>
<span class="t" style="left:756.2px;top:94.0px;line-height:15px;font:11.6px/15px 'Liberation Sans', sans-serif;color:#15428b;letter-spacing:-0.22px;">¶ Без инте...</span>
<div class="a" style="left:830px;top:63px;width:59px;height:32px;overflow:hidden;"><span class="t" style="left:0.5px;top:2px;font:bold 22px/28px 'Liberation Serif', serif;color:#000;letter-spacing:0.2px;">AaBbCc</span></div>
<span class="t" style="left:829.9px;top:94.0px;line-height:15px;font:11.6px/15px 'Liberation Sans', sans-serif;color:#15428b;letter-spacing:0.05px;">Заголово...</span>
<div class="a" style="left:902px;top:63px;width:59px;height:32px;overflow:hidden;"><span class="t" style="left:1px;top:3px;font:italic bold 19px/28px 'Liberation Serif', serif;color:#000;letter-spacing:-0.1px;">AaBbCcD</span></div>
<span class="t" style="left:902.2px;top:94.0px;line-height:15px;font:11.6px/15px 'Liberation Sans', sans-serif;color:#15428b;letter-spacing:0.08px;">Заголово...</span>
<div class="a" style="left:974px;top:63px;width:59px;height:32px;overflow:hidden;"><span class="t" style="left:0.5px;top:2px;font:bold 22px/28px 'Liberation Serif', serif;color:#000;letter-spacing:0.2px;">AaBbCc</span></div>
<span class="t" style="left:977.9px;top:94.0px;line-height:15px;font:11.6px/15px 'Liberation Sans', sans-serif;color:#15428b;letter-spacing:-0.03px;">Название</span>
<div class="a" style="left:1041px;top:58px;width:15px;height:20px;border:1px solid #c3d2e6;background:linear-gradient(#eef2f7,#dfe6ef);border-radius:2px 2px 0 0;"></div>
<div class="a" style="left:1041px;top:78px;width:15px;height:19px;border:1px solid #b2c7e2;background:linear-gradient(#dbe7f6,#c9dbf1);"></div>
<div class="a" style="left:1041px;top:97px;width:15px;height:19px;border:1px solid #b2c7e2;background:linear-gradient(#dbe7f6,#c9dbf1);border-radius:0 0 2px 2px;"></div>
<svg style="left:0;top:0" width="1280" height="145"><polygon points="1046,69.500 1051,69.500 1048.500,66.500" fill="#b0b8c4"/><polygon points="1045.5,85.8 1051.5,85.8 1048.5,89.3" fill="#5076b0"/><polygon points="1045.5,106.8 1051.5,106.8 1048.5,110.3" fill="#5076b0"/><path d="M1046,104.500 h5" stroke="#567db1" stroke-width="1"/></svg>
<span class="t" style="left:1060.4px;top:91.0px;line-height:15px;font:11.6px/15px 'Liberation Sans', sans-serif;color:#15428b;letter-spacing:0.15px;">Изменить</span>
<span class="t" style="left:1067.9px;top:103.0px;line-height:15px;font:11.6px/15px 'Liberation Sans', sans-serif;color:#15428b;letter-spacing:-0.24px;">стили</span>
<svg style="left:0;top:0" width="1280" height="145"><polygon points="1100,110.8 1106,110.8 1103,114.3" fill="#5076b0"/></svg>
<span class="t" style="left:1072.0px;top:51.6px;line-height:34px;font:26.5px/34px 'Liberation Sans', sans-serif;color:#b648be;transform:scaleX(0.72);transform-origin:0 50%;">A</span>
<span class="t" style="left:1077.5px;top:53.0px;line-height:44px;font:34px/44px 'Liberation Serif', serif;color:#5a8cd8;-webkit-text-stroke:0.4px #5a8cd8;">A</span>
<span class="t" style="left:1148.9px;top:57.0px;line-height:15px;font:11.6px/15px 'Liberation Sans', sans-serif;color:#15428b;letter-spacing:0.20px;">Найти</span>
<span class="t" style="left:1148.9px;top:79.0px;line-height:15px;font:11.6px/15px 'Liberation Sans', sans-serif;color:#15428b;letter-spacing:-0.03px;">Заменить</span>
<span class="t" style="left:1148.9px;top:101.0px;line-height:15px;font:11.6px/15px 'Liberation Sans', sans-serif;color:#15428b;letter-spacing:-0.23px;">Выделить</span>
<svg style="left:0;top:0" width="1280" height="145"><polygon points="1186,63.8 1192,63.8 1189,67.3" fill="#5076b0"/><polygon points="1203,107.8 1209,107.8 1206,111.3" fill="#5076b0"/></svg>
<svg style="left:0;top:0" width="1280" height="145"><rect x="1130.500" y="64.500" width="6" height="7" rx="1" fill="#eef3fb" stroke="#2f4475" stroke-width="1"/><rect x="1138.500" y="64.500" width="6" height="7" rx="1" fill="#eef3fb" stroke="#2f4475" stroke-width="1"/><path d="M1132,64.500 v-4 l1.500,-2 l1.500,2 v4z M1140,64.500 v-4 l1.500,-2 l1.500,2 v4z" fill="#cfd9ee" stroke="#2f4475" stroke-width="1"/><rect x="1136" y="62.500" width="3" height="3.500" fill="#2f4475"/><rect x="1131" y="68" width="5" height="3" fill="#b9c6e0"/><rect x="1139" y="68" width="5" height="3" fill="#b9c6e0"/><path d="M1133.500,101.500 v11.500 l2.700,-2.500 l2,4.300 l1.800,-0.800 l-2,-4.200 h3.700z" fill="#fff" stroke="#3a4560" stroke-width="1"/></svg>
<span class="t" style="left:1130.5px;top:77.0px;line-height:13px;font:10px/13px 'Liberation Sans', sans-serif;color:#444;font-weight:bold;">a</span>
<span class="t" style="left:1136.0px;top:76.0px;line-height:14px;font:11px/14px 'Liberation Serif', serif;color:#a8aab0;">b</span>
<span class="t" style="left:1136.5px;top:84.5px;line-height:13px;font:10px/13px 'Liberation Sans', sans-serif;color:#333;font-weight:bold;">a</span>
<span class="t" style="left:1141.7px;top:84.5px;line-height:13px;font:10px/13px 'Liberation Sans', sans-serif;color:#2a8a2a;font-weight:bold;">c</span>
<svg style="left:0;top:0" width="1280" height="145"><path d="M1131.500,87.500 v3 h3.500 m-1.800,-1.800 l1.800,1.800 l-1.800,1.800" fill="none" stroke="#4a5570" stroke-width="1.100"/></svg>
<div class="a" style="left:0px;top:140px;width:1280px;height:26px;background:#9ebae3;border-top:1px solid #8fa6cc;"></div>
<div class="a" style="left:0px;top:166px;width:1264px;height:565px;background:#9ebae3;"></div>
<div class="a" style="left:24px;top:166px;width:23px;height:565px;background:linear-gradient(#a0bde7 0,#86a8da 118px,#7da0d4 195px,#5a86c5 400px,#5580c0 470px,#6a94d2 565px);"></div>
<svg style="left:24px;top:166px" width="23" height="140"><defs><linearGradient id="lg1" x1="0" y1="0" x2="0" y2="1"><stop offset="0" stop-color="#acc6ed"/><stop offset="1" stop-color="#a2bee8"/></linearGradient></defs><polygon points="0,0 23,0 23,85 0,94" fill="url(#lg1)"/><polygon points="0,94 23,85 23,101 0,116" fill="#96b5e3"/><polygon points="0,116 23,101 23,103 0,118" fill="#a4c0ea"/></svg>
<div class="a" style="left:19px;top:166px;width:5px;height:565px;background:#a3bfe8;"></div>
<div class="a" style="left:43px;top:166px;width:4px;height:565px;background:linear-gradient(90deg,rgba(40,60,100,0),rgba(40,60,100,.35));"></div>
<div class="a" style="left:1240px;top:166px;width:24px;height:565px;background:linear-gradient(#a0bde7 0,#7da0d4 195px,#5a86c5 400px,#5580c0 470px,#6a94d2 565px);"></div>
<div class="a" style="left:1240px;top:166px;width:12px;height:565px;background:linear-gradient(90deg,rgba(30,45,80,.5),rgba(40,60,100,.18) 50%,rgba(40,60,100,0));"></div>
<div class="a" style="left:47px;top:166px;width:1193px;height:565px;background:#fff;"></div>
<div class="a" style="left:46px;top:166px;width:2px;height:565px;background:#2a3a55;width:1px;left:47px;"></div>
<div class="a" style="left:1239px;top:166px;width:1px;height:565px;background:#3b4e70;"></div>
<div class="a" style="left:47px;top:147px;width:1193px;height:13px;background:#fff;"></div>
<div class="a" style="left:47px;top:147px;width:114px;height:13px;background:#b5cbee;border:1px solid #c3d6f2;"></div>
<div class="a" style="left:1153px;top:147px;width:87px;height:13px;background:#b5cbee;border:1px solid #c3d6f2;"></div>
<svg style="left:0;top:0" width="1280" height="170"><rect x="61" y="152" width="1" height="2" fill="#3a3a3a"/><rect x="75" y="151" width="1" height="5" fill="#3a3a3a"/><rect x="89" y="152" width="1" height="2" fill="#3a3a3a"/><rect x="117" y="152" width="1" height="2" fill="#3a3a3a"/><rect x="132" y="151" width="1" height="5" fill="#3a3a3a"/><rect x="146" y="152" width="1" height="2" fill="#3a3a3a"/><rect x="174" y="152" width="1" height="2" fill="#3a3a3a"/><rect x="188" y="151" width="1" height="5" fill="#3a3a3a"/><rect x="203" y="152" width="1" height="2" fill="#3a3a3a"/><rect x="231" y="152" width="1" height="2" fill="#3a3a3a"/><rect x="245" y="151" width="1" height="5" fill="#3a3a3a"/><rect x="259" y="152" width="1" height="2" fill="#3a3a3a"/><rect x="288" y="152" width="1" height="2" fill="#3a3a3a"/><rect x="302" y="151" width="1" height="5" fill="#3a3a3a"/><rect x="316" y="152" width="1" height="2" fill="#3a3a3a"/><rect x="344" y="152" width="1" height="2" fill="#3a3a3a"/><rect x="358" y="151" width="1" height="5" fill="#3a3a3a"/><rect x="373" y="152" width="1" height="2" fill="#3a3a3a"/><rect x="401" y="152" width="1" height="2" fill="#3a3a3a"/><rect x="415" y="151" width="1" height="5" fill="#3a3a3a"/><rect x="429" y="152" width="1" height="2" fill="#3a3a3a"/><rect x="458" y="152" width="1" height="2" fill="#3a3a3a"/><rect x="472" y="151" width="1" height="5" fill="#3a3a3a"/><rect x="486" y="152" width="1" height="2" fill="#3a3a3a"/><rect x="514" y="152" width="1" height="2" fill="#3a3a3a"/><rect x="529" y="151" width="1" height="5" fill="#3a3a3a"/><rect x="543" y="152" width="1" height="2" fill="#3a3a3a"/><rect x="571" y="152" width="1" height="2" fill="#3a3a3a"/><rect x="585" y="151" width="1" height="5" fill="#3a3a3a"/><rect x="599" y="152" width="1" height="2" fill="#3a3a3a"/><rect x="628" y="152" width="1" height="2" fill="#3a3a3a"/><rect x="642" y="151" width="1" height="5" fill="#3a3a3a"/><rect x="656" y="152" width="1" height="2" fill="#3a3a3a"/><rect x="684" y="152" width="1" height="2" fill="#3a3a3a"/><rect x="699" y="151" width="1" height="5" fill="#3a3a3a"/><rect x="713" y="152" width="1" height="2" fill="#3a3a3a"/><rect x="741" y="152" width="1" height="2" fill="#3a3a3a"/><rect x="755" y="151" width="1" height="5" fill="#3a3a3a"/><rect x="770" y="152" width="1" height="2" fill="#3a3a3a"/><rect x="798" y="152" width="1" height="2" fill="#3a3a3a"/><rect x="812" y="151" width="1" height="5" fill="#3a3a3a"/><rect x="826" y="152" width="1" height="2" fill="#3a3a3a"/><rect x="855" y="152" width="1" height="2" fill="#3a3a3a"/><rect x="869" y="151" width="1" height="5" fill="#3a3a3a"/><rect x="883" y="152" width="1" height="2" fill="#3a3a3a"/><rect x="911" y="152" width="1" height="2" fill="#3a3a3a"/><rect x="925" y="151" width="1" height="5" fill="#3a3a3a"/><rect x="940" y="152" width="1" height="2" fill="#3a3a3a"/><rect x="968" y="152" width="1" height="2" fill="#3a3a3a"/><rect x="982" y="151" width="1" height="5" fill="#3a3a3a"/><rect x="996" y="152" width="1" height="2" fill="#3a3a3a"/><rect x="1025" y="152" width="1" height="2" fill="#3a3a3a"/><rect x="1039" y="151" width="1" height="5" fill="#3a3a3a"/><rect x="1053" y="152" width="1" height="2" fill="#3a3a3a"/><rect x="1081" y="152" width="1" height="2" fill="#3a3a3a"/><rect x="1096" y="151" width="1" height="5" fill="#3a3a3a"/><rect x="1110" y="152" width="1" height="2" fill="#3a3a3a"/><rect x="1138" y="152" width="1" height="2" fill="#3a3a3a"/><rect x="1152" y="151" width="1" height="5" fill="#3a3a3a"/><rect x="1166" y="152" width="1" height="2" fill="#3a3a3a"/><rect x="1195" y="152" width="1" height="2" fill="#3a3a3a"/><rect x="1209" y="151" width="1" height="5" fill="#3a3a3a"/><rect x="1223" y="152" width="1" height="2" fill="#3a3a3a"/></svg>
<span class="t" style="left:47.4px;top:147.7px;line-height:12px;font:9.5px/12px 'Liberation Sans', sans-serif;color:#4a4a4a;">2</span>
<span class="t" style="left:101.7px;top:147.7px;line-height:12px;font:9.5px/12px 'Liberation Sans', sans-serif;color:#4a4a4a;">1</span>
<span class="t" style="left:215.1px;top:147.7px;line-height:12px;font:9.5px/12px 'Liberation Sans', sans-serif;color:#4a4a4a;">1</span>
<span class="t" style="left:271.9px;top:147.7px;line-height:12px;font:9.5px/12px 'Liberation Sans', sans-serif;color:#4a4a4a;">2</span>
<span class="t" style="left:328.6px;top:147.7px;line-height:12px;font:9.5px/12px 'Liberation Sans', sans-serif;color:#4a4a4a;">3</span>
<span class="t" style="left:385.3px;top:147.7px;line-height:12px;font:9.5px/12px 'Liberation Sans', sans-serif;color:#4a4a4a;">4</span>
<span class="t" style="left:442.0px;top:147.7px;line-height:12px;font:9.5px/12px 'Liberation Sans', sans-serif;color:#4a4a4a;">5</span>
<span class="t" style="left:498.7px;top:147.7px;line-height:12px;font:9.5px/12px 'Liberation Sans', sans-serif;color:#4a4a4a;">6</span>
<span class="t" style="left:555.4px;top:147.7px;line-height:12px;font:9.5px/12px 'Liberation Sans', sans-serif;color:#4a4a4a;">7</span>
<span class="t" style="left:612.1px;top:147.7px;line-height:12px;font:9.5px/12px 'Liberation Sans', sans-serif;color:#4a4a4a;">8</span>
<span class="t" style="left:668.8px;top:147.7px;line-height:12px;font:9.5px/12px 'Liberation Sans', sans-serif;color:#4a4a4a;">9</span>
<span class="t" style="left:722.8px;top:147.7px;line-height:12px;font:9.5px/12px 'Liberation Sans', sans-serif;color:#4a4a4a;">10</span>
<span class="t" style="left:779.5px;top:147.7px;line-height:12px;font:9.5px/12px 'Liberation Sans', sans-serif;color:#4a4a4a;">11</span>
<span class="t" style="left:836.2px;top:147.7px;line-height:12px;font:9.5px/12px 'Liberation Sans', sans-serif;color:#4a4a4a;">12</span>
<span class="t" style="left:892.9px;top:147.7px;line-height:12px;font:9.5px/12px 'Liberation Sans', sans-serif;color:#4a4a4a;">13</span>
<span class="t" style="left:949.6px;top:147.7px;line-height:12px;font:9.5px/12px 'Liberation Sans', sans-serif;color:#4a4a4a;">14</span>
<span class="t" style="left:1006.3px;top:147.7px;line-height:12px;font:9.5px/12px 'Liberation Sans', sans-serif;color:#4a4a4a;">15</span>
<span class="t" style="left:1063.0px;top:147.7px;line-height:12px;font:9.5px/12px 'Liberation Sans', sans-serif;color:#4a4a4a;">16</span>
<span class="t" style="left:1119.7px;top:147.7px;line-height:12px;font:9.5px/12px 'Liberation Sans', sans-serif;color:#4a4a4a;">17</span>
<span class="t" style="left:1176.4px;top:147.7px;line-height:12px;font:9.5px/12px 'Liberation Sans', sans-serif;color:#4a4a4a;">18</span>
<svg style="left:0;top:0" width="1280" height="170"><rect x="231" y="161" width="1" height="3" fill="#5f6f8c"/><rect x="302" y="161" width="1" height="3" fill="#5f6f8c"/><rect x="373" y="161" width="1" height="3" fill="#5f6f8c"/><rect x="444" y="161" width="1" height="3" fill="#5f6f8c"/><rect x="514" y="161" width="1" height="3" fill="#5f6f8c"/><rect x="585" y="161" width="1" height="3" fill="#5f6f8c"/><rect x="656" y="161" width="1" height="3" fill="#5f6f8c"/><rect x="727" y="161" width="1" height="3" fill="#5f6f8c"/><rect x="798" y="161" width="1" height="3" fill="#5f6f8c"/><rect x="869" y="161" width="1" height="3" fill="#5f6f8c"/><rect x="940" y="161" width="1" height="3" fill="#5f6f8c"/><rect x="1010" y="161" width="1" height="3" fill="#5f6f8c"/><rect x="1081" y="161" width="1" height="3" fill="#5f6f8c"/><rect x="1152" y="161" width="1" height="3" fill="#5f6f8c"/></svg>
<svg style="left:0;top:0" width="1280" height="170"><defs><linearGradient id="mk" x1="0" y1="0" x2="0" y2="1"><stop offset="0" stop-color="#fdfeff"/><stop offset="1" stop-color="#b4c3dd"/></linearGradient></defs><polygon points="227,144.500 236,144.500 236,147.500 231.500,151.500 227,147.500" fill="url(#mk)" stroke="#4a6db5" stroke-width="1"/><polygon points="156.500,159.500 156.500,156 160.500,152 164.500,156 164.500,159.500" fill="url(#mk)" stroke="#3a5fa8" stroke-width="1"/><rect x="156.500" y="159.500" width="8" height="6" fill="url(#mk)" stroke="#3a5fa8" stroke-width="1"/><polygon points="1149,159.500 1149,156 1153,152 1157,156 1157,159.500" fill="url(#mk)" stroke="#3a5fa8" stroke-width="1"/></svg>
<div class="a" style="left:0px;top:142px;width:25px;height:24px;background:#a9c4ed;border:1px solid #5b86d0;"></div>
<div class="a" style="left:5px;top:146px;width:15px;height:15px;background:#c4d8f4;border:1px solid #5b86d0;"></div>
<svg style="left:0;top:0" width="30" height="170"><path d="M11,151.500 V157.500 H17.500" fill="none" stroke="#1c2f55" stroke-width="2"/></svg>
<div class="a" style="left:5px;top:166px;width:14px;height:565px;background:#fff;"></div>
<svg style="left:0;top:0" width="30" height="731"><rect x="11" y="178" width="2" height="1" fill="#3a3a3a"/><rect x="10" y="192" width="5" height="1" fill="#3a3a3a"/><rect x="11" y="206" width="2" height="1" fill="#3a3a3a"/><rect x="11" y="235" width="2" height="1" fill="#3a3a3a"/><rect x="10" y="249" width="5" height="1" fill="#3a3a3a"/><rect x="11" y="263" width="2" height="1" fill="#3a3a3a"/><rect x="11" y="291" width="2" height="1" fill="#3a3a3a"/><rect x="10" y="306" width="5" height="1" fill="#3a3a3a"/><rect x="11" y="320" width="2" height="1" fill="#3a3a3a"/><rect x="11" y="348" width="2" height="1" fill="#3a3a3a"/><rect x="10" y="362" width="5" height="1" fill="#3a3a3a"/><rect x="11" y="376" width="2" height="1" fill="#3a3a3a"/><rect x="11" y="405" width="2" height="1" fill="#3a3a3a"/><rect x="10" y="419" width="5" height="1" fill="#3a3a3a"/><rect x="11" y="433" width="2" height="1" fill="#3a3a3a"/><rect x="11" y="461" width="2" height="1" fill="#3a3a3a"/><rect x="10" y="476" width="5" height="1" fill="#3a3a3a"/><rect x="11" y="490" width="2" height="1" fill="#3a3a3a"/><rect x="11" y="518" width="2" height="1" fill="#3a3a3a"/><rect x="10" y="532" width="5" height="1" fill="#3a3a3a"/><rect x="11" y="547" width="2" height="1" fill="#3a3a3a"/><rect x="11" y="575" width="2" height="1" fill="#3a3a3a"/><rect x="10" y="589" width="5" height="1" fill="#3a3a3a"/><rect x="11" y="603" width="2" height="1" fill="#3a3a3a"/><rect x="11" y="632" width="2" height="1" fill="#3a3a3a"/><rect x="10" y="646" width="5" height="1" fill="#3a3a3a"/><rect x="11" y="660" width="2" height="1" fill="#3a3a3a"/><rect x="11" y="688" width="2" height="1" fill="#3a3a3a"/><rect x="10" y="702" width="5" height="1" fill="#3a3a3a"/><rect x="11" y="717" width="2" height="1" fill="#3a3a3a"/></svg>
<span class="t" style="left:12px;top:221.0px;transform:translate(-50%,-50%) rotate(-90deg);font:9.5px 'Liberation Sans', sans-serif;color:#4a4a4a;">7</span>
<span class="t" style="left:12px;top:277.7px;transform:translate(-50%,-50%) rotate(-90deg);font:9.5px 'Liberation Sans', sans-serif;color:#4a4a4a;">8</span>
<span class="t" style="left:12px;top:334.4px;transform:translate(-50%,-50%) rotate(-90deg);font:9.5px 'Liberation Sans', sans-serif;color:#4a4a4a;">9</span>
<span class="t" style="left:12px;top:391.1px;transform:translate(-50%,-50%) rotate(-90deg);font:9.5px 'Liberation Sans', sans-serif;color:#4a4a4a;">10</span>
<span class="t" style="left:12px;top:447.8px;transform:translate(-50%,-50%) rotate(-90deg);font:9.5px 'Liberation Sans', sans-serif;color:#4a4a4a;">11</span>
<span class="t" style="left:12px;top:504.5px;transform:translate(-50%,-50%) rotate(-90deg);font:9.5px 'Liberation Sans', sans-serif;color:#4a4a4a;">12</span>
<span class="t" style="left:12px;top:561.2px;transform:translate(-50%,-50%) rotate(-90deg);font:9.5px 'Liberation Sans', sans-serif;color:#4a4a4a;">13</span>
<span class="t" style="left:12px;top:617.9px;transform:translate(-50%,-50%) rotate(-90deg);font:9.5px 'Liberation Sans', sans-serif;color:#4a4a4a;">14</span>
<span class="t" style="left:12px;top:674.6px;transform:translate(-50%,-50%) rotate(-90deg);font:9.5px 'Liberation Sans', sans-serif;color:#4a4a4a;">15</span>
<div class="a" style="left:5px;top:715px;width:14px;height:16px;overflow:hidden;"><span class="t" style="left:0;top:0;width:14px;height:40px;"><span style="position:absolute;left:7px;top:16.3px;transform:translate(-50%,-50%) rotate(-90deg);font:9.5px 'Liberation Sans', sans-serif;color:#4a4a4a;">16</span></span></div>
<div class="a" style="left:1263px;top:140px;width:17px;height:608px;background:linear-gradient(90deg,#7b9fd2,#7399cc 50%,#7fa3d5 90%,#9ab8e2);border-left:1px solid #b0caee;"></div>
<div class="a" style="left:1263px;top:140px;width:17px;height:9px;background:#a6c2eb;"></div>
<div class="a" style="left:1267px;top:144px;width:9px;height:2px;background:#2b3a5c;"></div>
<div class="a" style="left:1263px;top:148px;width:17px;height:17px;background:#bcc6d8;border:1px solid #8ea0be;"></div>
<svg style="left:0;top:0" width="1280" height="760"><rect x="1266.500" y="152.500" width="10" height="6" fill="#f4eaf2" stroke="#33456a" stroke-width="1"/><rect x="1267.500" y="150.500" width="4" height="3" fill="#f4eaf2" stroke="#33456a" stroke-width="1"/><rect x="1271.500" y="157.500" width="4" height="3" fill="#f4eaf2" stroke="#33456a" stroke-width="1"/><path d="M1271.500,155v2M1274.500,155v2" stroke="#7a86a5" stroke-width="1"/><polygon points="1267,176 1276,176 1271.500,171.500" fill="#3f4f75"/><polygon points="1267,669 1276,669 1271.500,673.500" fill="#3f4f75"/><path d="M1268,688 l3,-3 l3,3z M1268,692 l3,-3 l3,3z" fill="#111"/><circle cx="1271" cy="704.500" r="2.700" fill="#9aa" stroke="#222" stroke-width="1"/><path d="M1268,717 l3,3 l3,-3z M1268,721 l3,3 l3,-3z" fill="#111"/></svg>
<div class="a" style="left:1264px;top:679px;width:16px;height:52px;background:#9ebae3;"></div>
<svg style="left:0;top:0" width="1280" height="760"><path d="M1268.500,688.500 l3,-3 l3,3z M1268.500,692 l3,-3 l3,3z" fill="#111"/><circle cx="1271.500" cy="704.500" r="2.700" fill="#c8c8c8" stroke="#222" stroke-width="1"/><path d="M1268.500,717 l3,3 l3,-3z M1268.500,720.500 l3,3 l3,-3z" fill="#111"/></svg>
<div class="a" style="left:1264px;top:486px;width:15px;height:75px;background:linear-gradient(90deg,#f4f7fc,#dfe6f1 50%,#c8d3e4);border:1px solid #8a9cba;border-radius:2px;"></div>
<svg style="left:0;top:0" width="1280" height="760"><path d="M1268,519.500h7M1268,521.500h7M1268,523.500h7M1268,525.500h7" stroke="#6f84a8" stroke-width="1"/></svg>
<svg style="left:0;top:0" width="1280" height="731"><path d="M286.500,378 A165.500,83.600 0 0 1 617.500,378 A165.500,78.400 0 0 1 286.500,378 Z" fill="none" stroke="#000" stroke-width="6.200"/><rect x="236" y="380" width="436" height="2" fill="#000"/><polygon points="670,375.300 682,381 670,386.700" fill="#000"/><rect x="451" y="266" width="2" height="238" fill="#000"/><polygon points="446.300,268 452,256 457.700,268" fill="#000"/></svg>
<span class="t" style="left:431.0px;top:225.0px;line-height:32px;font:25px/32px 'Liberation Serif', serif;color:#000;font-style:italic;-webkit-text-stroke:0;">Y</span>
<span class="t" style="left:687.0px;top:363.0px;line-height:32px;font:25px/32px 'Liberation Serif', serif;color:#000;font-style:italic;-webkit-text-stroke:0;transform:scaleX(1.13);transform-origin:0 50%;">X</span>
<span class="t" style="left:429.0px;top:307.8px;line-height:32px;font:25px/32px 'Liberation Serif', serif;color:#000;font-style:italic;-webkit-text-stroke:0;">B</span>
<span class="t" style="left:430.5px;top:390.0px;line-height:32px;font:25px/32px 'Liberation Serif', serif;color:#000;-webkit-text-stroke:0;transform:scaleX(0.93);transform-origin:0 50%;">0</span>
<span class="t" style="left:525.3px;top:390.0px;line-height:32px;font:25px/32px 'Liberation Serif', serif;color:#000;font-style:italic;-webkit-text-stroke:0;">A</span>
<div class="a" style="left:0px;top:731px;width:1264px;height:16px;background:#7f9fce;border-top:1px solid #93b0de;"></div>
<div class="a" style="left:1264px;top:731px;width:16px;height:17px;background:#9ebae3;"></div>
<div class="a" style="left:23px;top:732px;width:1215px;height:15px;border:1px solid #64799e;border-radius:2px;background:linear-gradient(#f3f5f8,#e6eaf1 42%,#bcc8db 55%,#c9d3e3);box-shadow:inset 0 0 0 1px rgba(255,255,255,.5);"></div>
<svg style="left:0;top:0" width="1280" height="800"><polygon points="10.500,735 10.500,744 5,739.500" fill="#445585"/><polygon points="1252,734.500 1252,744.500 1257.500,739.500" fill="#3f5080"/><path d="M627.500,736 v8 M629.500,736 v8 M631.500,736 v8 M633.500,736 v8" stroke="#6f7f9a" stroke-width="1"/></svg>
<div class="a" style="left:0px;top:747px;width:1280px;height:23px;background:linear-gradient(#5e82c2 0,#5e82c2 1px,#8fabd9 1px,#8fabd9 2px,#eaf2fc 2px,#eaf2fc 3px,#d5e4f9 3px,#cfe0f8 8px,#bcd5f6 11px,#c2d9f7 15px,#d9e7fa 23px);"></div>
<div class="a" style="left:104px;top:750px;width:2px;height:19px;background:linear-gradient(90deg,#9db9e2 50%,#eef5fe 50%);"></div>
<div class="a" style="left:205px;top:750px;width:2px;height:19px;background:linear-gradient(90deg,#9db9e2 50%,#eef5fe 50%);"></div>
<div class="a" style="left:354px;top:750px;width:2px;height:19px;background:linear-gradient(90deg,#9db9e2 50%,#eef5fe 50%);"></div>
<div class="a" style="left:998.5px;top:750px;width:2.0px;height:19px;background:linear-gradient(90deg,#9db9e2 50%,#eef5fe 50%);"></div>
<span class="t" style="left:7.6px;top:751.0px;line-height:15px;font:11.6px/15px 'Liberation Sans', sans-serif;color:#15428b;letter-spacing:-0.09px;">Страница: 2 из 2</span>
<span class="t" style="left:113.6px;top:751.0px;line-height:15px;font:11.6px/15px 'Liberation Sans', sans-serif;color:#15428b;letter-spacing:-0.32px;">Число слов: 109</span>
<span class="t" style="left:246.2px;top:751.0px;line-height:15px;font:11.6px/15px 'Liberation Sans', sans-serif;color:#15428b;letter-spacing:-0.29px;">Русский (Россия)</span>
<svg style="left:0;top:0" width="1280" height="800"><path d="M214,761 l7,-4 l8,4 l-7,4z" fill="#f4f7fb" stroke="#5f7fb5" stroke-width="1"/><path d="M214,761 v2.500 l8,4 l7,-4 v-2.500" fill="#7f9fd0" stroke="#456aa5" stroke-width="1"/><path d="M219,756 l2.500,3 l6,-7.500" fill="none" stroke="#2f5fc0" stroke-width="2.200"/></svg>
<div class="a" style="left:1005px;top:750px;width:91px;height:19px;border:1px solid #a3bbdb;border-radius:3px;background:linear-gradient(#dbe6f5,#cddcf0 45%,#c0d2ea 50%,#d5e2f4);"></div>
<div class="a" style="left:1005px;top:750px;width:19px;height:19px;border:1px solid #dba85a;border-top-color:#c9a070;border-bottom-color:#e8c87a;border-radius:3px 0 0 3px;background:linear-gradient(#f8d9a8,#fbb654 40%,#fb9f2a 52%,#fdd27c 80%,#ffeeb0);"></div>
<div class="a" style="left:1042px;top:751px;width:1px;height:17px;background:#a9c0de;"></div>
<div class="a" style="left:1060px;top:751px;width:1px;height:17px;background:#a9c0de;"></div>
<div class="a" style="left:1078px;top:751px;width:1px;height:17px;background:#a9c0de;"></div>
<svg style="left:0;top:0" width="1280" height="800"><rect x="1009.500" y="753.500" width="10" height="12" fill="#fff" stroke="#444" stroke-width="1"/><path d="M1012,756.500h5M1012,758.500h5M1012,760.500h5M1012,762.500h5" stroke="#555" stroke-width="1"/><path d="M1027.500,754.500 q3,-1 5.500,1 q2.500,-2 5.500,-1 v9.500 q-3,-1 -5.500,1 q-2.500,-2 -5.500,-1z" fill="#fff" stroke="#444" stroke-width="1"/><path d="M1033,755.500 v9.500" stroke="#444" stroke-width="1"/><path d="M1029,757.500h2.500M1029,759.500h2.500M1029,761.500h2.500M1034.500,757.500h2.500M1034.500,759.500h2.500M1034.500,761.500h2.500" stroke="#777" stroke-width="1"/><rect x="1045.500" y="753.500" width="9" height="9" fill="#fff" stroke="#444" stroke-width="1"/><path d="M1047,756.500h6M1047,758.500h6" stroke="#666" stroke-width="1"/><circle cx="1054.500" cy="763" r="3.500" fill="#3a86d0" stroke="#2a5a9a" stroke-width=".8"/><path d="M1053,761 q2,1 1,3 q2,0 2.500,-2z" fill="#4caa4c"/><path d="M1064,755.500h9M1067,758.500h7M1067,761.500h7M1064,764.500h9" stroke="#555" stroke-width="1" stroke-dasharray="2,1"/><path d="M1082,754.500h10M1082,757.500h10M1082,760.500h10M1082,763.500h10" stroke="#444" stroke-width="1.200"/><path d="M1158,759.500 h100" stroke="#8fa8d0" stroke-width="1"/><path d="M1158,760.500 h100" stroke="#eef4fd" stroke-width="1"/><circle cx="1149" cy="759.500" r="7.500" fill="#dfe9f9" stroke="#6f88b5" stroke-width="1.200"/><circle cx="1149" cy="759.500" r="6" fill="none" stroke="#fff" stroke-width="1" opacity=".8"/><circle cx="1267" cy="759.500" r="7.500" fill="#dfe9f9" stroke="#6f88b5" stroke-width="1.200"/><circle cx="1267" cy="759.500" r="6" fill="none" stroke="#fff" stroke-width="1" opacity=".8"/><path d="M1145.500,759.500 h7" stroke="#4a5d85" stroke-width="2"/><path d="M1263.500,759.500 h7 M1267,756 v7" stroke="#4a5d85" stroke-width="2"/><path d="M1209.500,752.500 h8 v8.500 l-4,4.500 l-4,-4.500z" fill="#e9f0fb" stroke="#5f78a8" stroke-width="1"/><path d="M1213.500,755 v5.500" stroke="#8ea3c8" stroke-width="1.500"/></svg>
<span class="t" style="left:1104.4px;top:751.0px;line-height:15px;font:11.6px/15px 'Liberation Sans', sans-serif;color:#15428b;letter-spacing:-0.54px;">150%</span>
<div class="a" style="left:0px;top:770px;width:1280px;height:30px;background:linear-gradient(#2c2c2c 0,#787878 1px,#6c6c6c 2px,#3c3c3c 14px,#020202 15px,#000 30px);"></div>
<div class="a" style="left:64px;top:772px;width:155px;height:26px;border:1px solid #6a6a6a;border-radius:3px;background:linear-gradient(rgba(255,255,255,.06),rgba(255,255,255,.02) 48%,rgba(0,0,0,0) 52%);box-shadow:0 0 0 1px #000, inset 0 0 0 1px rgba(255,255,255,.06);"></div>
<div class="a" style="left:224px;top:772px;width:156px;height:26px;border:1px solid #6a6a6a;border-radius:3px;background:linear-gradient(rgba(255,255,255,.06),rgba(255,255,255,.02) 48%,rgba(0,0,0,0) 52%);box-shadow:0 0 0 1px #000, inset 0 0 0 1px rgba(255,255,255,.06);"></div>
<div class="a" style="left:383px;top:772px;width:157px;height:26px;border:1px solid #808080;border-radius:3px;background:linear-gradient(#525252,#2e2e2e 48%,#000 52%,#080808);box-shadow:0 0 0 1px #000, inset 0 0 0 1px rgba(255,255,255,.06);"></div>
<span class="t" style="left:91.2px;top:778.0px;line-height:15px;font:11.6px/15px 'Liberation Sans', sans-serif;color:#fff;letter-spacing:0.19px;">Формулы 4 Мех. и ...</span>
<span class="t" style="left:252.2px;top:778.0px;line-height:15px;font:11.6px/15px 'Liberation Sans', sans-serif;color:#fff;letter-spacing:0.11px;">Тестирование ФИЗ...</span>
<span class="t" style="left:412.5px;top:778.0px;line-height:15px;font:11.6px/15px 'Liberation Sans', sans-serif;color:#fff;letter-spacing:0.16px;">Формулы 4 Мех. и ...</span>
<svg style="left:0;top:0" width="1280" height="800"><path d="M73,778.500 q0,-1.500 1.500,-1.500 h4 v16 h-4 q-1.500,0 -1.500,-1.500z" fill="#f3e08c" stroke="#c9ae52" stroke-width=".7"/><path d="M77.5,778 l7,-1 q1.500,0 1.500,1.500 v12 q0,1.500 -1.500,1.800 l-7,1.200z" fill="#f7ecae" stroke="#d4bc62" stroke-width=".7"/><path d="M76.5,778 v14" stroke="#fffbe0" stroke-width="1"/><rect x="84.3" y="786" width="1" height="4" fill="#4a90e0"/><path d="M233,778.500 q0,-1.500 1.500,-1.500 h4 v16 h-4 q-1.500,0 -1.500,-1.500z" fill="#f3e08c" stroke="#c9ae52" stroke-width=".7"/><path d="M237.5,778 l7,-1 q1.500,0 1.500,1.500 v12 q0,1.500 -1.500,1.800 l-7,1.200z" fill="#f7ecae" stroke="#d4bc62" stroke-width=".7"/><path d="M236.5,778 v14" stroke="#fffbe0" stroke-width="1"/><rect x="244.3" y="786" width="1" height="4" fill="#4a90e0"/><path d="M395.500,777.500 h9 l3,3 v13 h-12z" fill="#fff" stroke="#8a9ab5" stroke-width="1"/><rect x="392.500" y="780.500" width="10" height="9" fill="#2b5fc0" stroke="#1a3f8a" stroke-width="1"/><path d="M397,790.500h8M397,792h8" stroke="#b5c0d0" stroke-width="1"/></svg>
<span class="t" style="left:394.2px;top:780.0px;line-height:10px;font:8px/10px 'Liberation Sans', sans-serif;color:#fff;font-weight:bold;">W</span>
<div class="a" style="left:10px;top:766px;width:41px;height:41px;border-radius:50%;background:radial-gradient(circle at 50% 112%,#4fc0f0 0,#1f78b8 28%,#0f4470 55%,#0b2f50 78%,#14456e 100%);box-shadow:0 0 0 1.500px #0a1520, 0 0 3px 2px rgba(90,140,190,.35);"></div>
<div class="a" style="left:12px;top:767px;width:37px;height:21px;border-radius:19px 19px 40% 40% / 19px 19px 30% 30%;background:linear-gradient(rgba(200,220,235,.75),rgba(140,180,210,.25) 70%,rgba(120,160,200,.05));"></div>
<svg style="left:0;top:0" width="1280" height="800"><path d="M19.500,774.500 q6,-3.500 12,-0.500 l-2,9.500 q-5.500,-2.500 -11.500,0.500z" fill="#ee5a26"/><path d="M33,775 q5,3 10.500,-0.500 l-2,10 q-5.500,3 -10.500,0.500z" fill="#86bd38"/><path d="M17,785.500 q6,-3 11.500,-0.500 l-2,9.500 q-5.500,-2.500 -11.500,0.500z" fill="#3a9ae0"/><path d="M30,786 q5,3 10.500,0 l-2,10 q-5.500,3 -10.500,0.500z" fill="#f8c22a"/></svg>
<span class="t" style="left:988.2px;top:775.0px;line-height:16px;font:12px/16px 'Liberation Sans', sans-serif;color:#fff;letter-spacing:-0.99px;">EN</span>
<div class="a" style="left:1019px;top:776px;width:42px;height:18px;background:#7cfc3a;border:1px solid #e8e8e8;border-bottom-color:#9a9a9a;border-right-color:#b0b0b0;"></div>
<div class="a" style="left:1061px;top:779px;width:3px;height:10px;background:#8e8e8e;"></div>
<span class="t" style="left:1023.6px;top:777.0px;line-height:16px;font:12.5px/16px 'Liberation Sans', sans-serif;color:#000;letter-spacing:-0.58px;">100%</span>
<svg style="left:0;top:0" width="1280" height="800"><path d="M1077,779.700 h5 q1.500,0 1.500,1.500 v0.800 h4 v2 h-4 v1.800 h4 v2 h-4 v0.800 q0,1.500 -1.500,1.500 h-5 q-4,-0.800 -4,-5.200 q0,-4.400 4,-5.200z" fill="#0a0a0a" stroke="#ecea9e" stroke-width="1.400" stroke-linejoin="round"/><path d="M1109,780.500 l-5,4.500 l5,4.500" fill="none" stroke="#fff" stroke-width="2"/><rect x="1118.500" y="776.500" width="13" height="15" fill="#2a4fa0" stroke="#9ab4e8" stroke-width="1"/><circle cx="1125" cy="783" r="2.500" fill="#bcd0f5"/><path d="M1117,791 h14 l2,2.500 h-14z" fill="#1a3a8a"/><circle cx="1142" cy="784" r="7.500" fill="#d9eef5" stroke="#9fc6d6" stroke-width="1"/><circle cx="1142.500" cy="784.500" r="4.500" fill="#2a9ab8"/><circle cx="1142.500" cy="784.500" r="2" fill="#0a2a3a"/><rect x="1153" y="776" width="15" height="17" fill="#f4f4f4"/><polygon points="1154,777 1154,788 1161,782.500" fill="#1eb41e" stroke="#0a5a0a" stroke-width=".6"/><rect x="1160" y="783" width="7" height="9" fill="#ddd" stroke="#444" stroke-width=".8"/><rect x="1188.500" y="777.500" width="8" height="14" rx="1" fill="#bfe8c0" stroke="#eee" stroke-width="1"/><path d="M1182,777 v4 M1186,777 v4" stroke="#eee" stroke-width="1.500"/><path d="M1180.500,781 h7 v4 q-3.500,3 -7,0z" fill="#f4f4f4"/><path d="M1184,786 v6" stroke="#eee" stroke-width="1.500"/><rect x="1204.500" y="776.500" width="9" height="8" fill="#222" stroke="#eee" stroke-width="1.300"/><rect x="1200.500" y="780.500" width="9" height="8" fill="#222" stroke="#eee" stroke-width="1.300"/><path d="M1203,791 h5" stroke="#eee" stroke-width="1.500"/><path d="M1206,784 l7,7 M1213,784 l-7,7" stroke="#e81a1a" stroke-width="2.200"/><path d="M1218,780.500 h2 l4.500,-4.500 v13.500 l-4.500,-4.500 h-2z" fill="#f4f6fa" stroke="#8a9ac0" stroke-width=".6"/></svg>
<span class="t" style="left:1239.0px;top:777.0px;line-height:15px;font:11.6px/15px 'Liberation Sans', sans-serif;color:#fff;letter-spacing:-0.30px;">22:22</span>
</body></html>
